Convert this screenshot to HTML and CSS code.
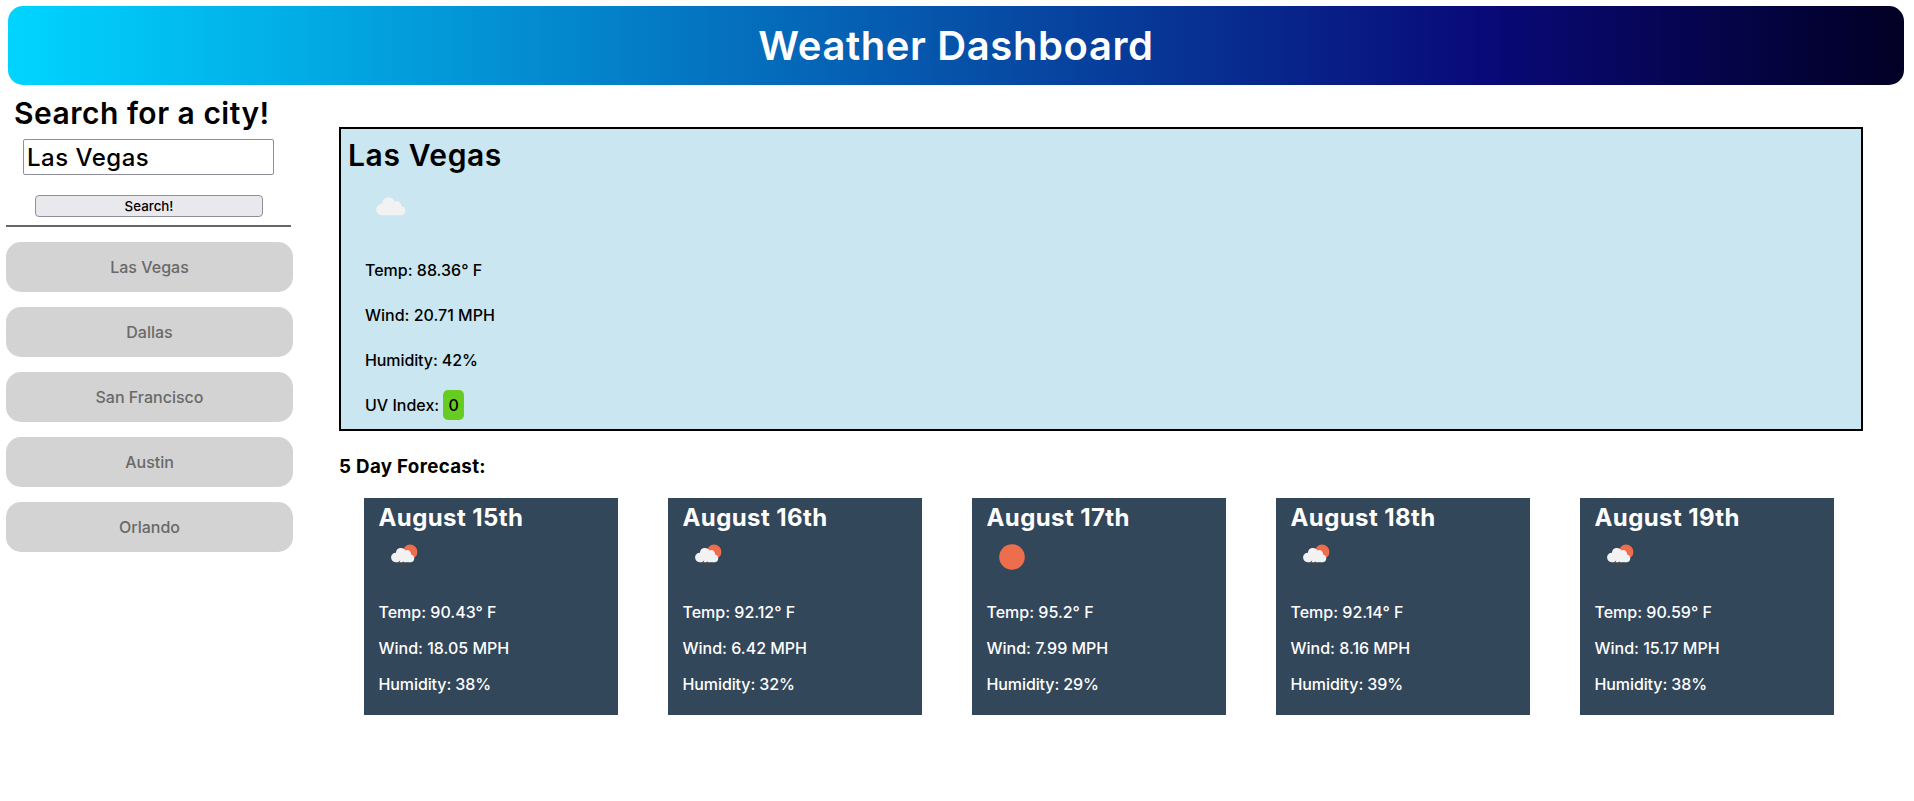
FILE: index.html
```html
<!DOCTYPE html>
<html lang="en">
<head>
<meta charset="utf-8">
<title>Weather Dashboard</title>
<link rel="stylesheet" href="styles.css">
</head>
<body>
<svg class="defs" aria-hidden="true">
  <symbol id="cloud" viewBox="0 0 50 50">
    <path class="cloud" d="M15.5 34.2a5.6 5.6 0 0 1 .8-11.4a6.3 6.3 0 0 1 12.2-2.2a4.4 4.4 0 0 1 6.6 4.4a4.7 4.7 0 0 1 .7 9.2z"/>
  </symbol>
  <symbol id="rain" viewBox="0 0 50 50">
    <circle class="sun" cx="31.1" cy="19.9" r="7.3"/>
    <path class="cloud" d="M16.6 30.2a4.7 4.7 0 0 1 .3-9.4a5.3 5.3 0 0 1 9.8-2.3a3.6 3.6 0 0 1 5.2 4a3.9 3.9 0 0 1 .1 7.7z"/>
    <path class="drops" d="M20.5 29.2l-1.2 2.2M24.2 30l-1 1.6M27.8 30.8l-1 1.6M18 33.6l-1.2 2.2M22.2 33.2l-1.4 2.4M25.8 34.2l-1.6 2.8"/>
  </symbol>
  <symbol id="sun" viewBox="0 0 50 50"><circle class="sun" cx="25" cy="25" r="12.8"/></symbol>
</svg>
<header class="banner"><h1>Weather Dashboard</h1></header>
<div class="layout">
  <aside class="sidebar">
    <h2 class="search-title">Search for a city!</h2>
    <input class="search-input" type="text" value="Las Vegas">
    <button class="search-button">Search!</button>
    <div class="rule"></div>
    <div class="history">
      <button>Las Vegas</button>
      <button>Dallas</button>
      <button>San Francisco</button>
      <button>Austin</button>
      <button>Orlando</button>
    </div>
  </aside>
  <main class="content">
    <section class="current">
      <h2>Las Vegas</h2>
      <svg class="icon"><use href="#cloud"/></svg>
      <p>Temp: 88.36° F</p>
      <p>Wind: 20.71 MPH</p>
      <p class="humidity">Humidity: 42%</p>
      <p>UV Index: <span class="uv">0</span></p>
    </section>
    <h3 class="forecast-title">5 Day Forecast:</h3>
    <section class="forecast">
      <article class="card"><h2>August 15th</h2><svg class="icon"><use href="#rain"/></svg><p>Temp: 90.43° F</p><p>Wind: 18.05 MPH</p><p class="humidity">Humidity: 38%</p></article>
      <article class="card"><h2>August 16th</h2><svg class="icon"><use href="#rain"/></svg><p>Temp: 92.12° F</p><p>Wind: 6.42 MPH</p><p class="humidity">Humidity: 32%</p></article>
      <article class="card"><h2>August 17th</h2><svg class="icon"><use href="#sun"/></svg><p>Temp: 95.2° F</p><p>Wind: 7.99 MPH</p><p class="humidity">Humidity: 29%</p></article>
      <article class="card"><h2>August 18th</h2><svg class="icon"><use href="#rain"/></svg><p>Temp: 92.14° F</p><p>Wind: 8.16 MPH</p><p class="humidity">Humidity: 39%</p></article>
      <article class="card"><h2>August 19th</h2><svg class="icon"><use href="#rain"/></svg><p>Temp: 90.59° F</p><p>Wind: 15.17 MPH</p><p class="humidity">Humidity: 38%</p></article>
    </section>
  </main>
</div>
</body>
</html>
```
FILE: styles.css
```css
* { box-sizing: border-box; margin: 0; padding: 0; }

body {
  font-family: Inter, sans-serif;
  font-size: 16px;
  font-weight: 500;
  color: #000;
  background: #fff;
}

.defs { display: none; }
.icon { display: block; width: 50px; height: 50px; }
.cloud { fill: #f2f2f2; }
.sun { fill: #ec6e4c; }
.drops { stroke: #484848; stroke-width: 1; stroke-linecap: round; fill: none; }

.banner {
  display: flex;
  align-items: center;
  justify-content: center;
  height: 79px;
  margin: 6px 10px 0 8px;
  border-radius: 15px;
  color: #fff;
  background: linear-gradient(270deg, #020024 0%, #090979 22%, #00d4ff 100%);
}
.banner h1 {
  font-size: 40px;
  font-weight: 600;
  line-height: 48px;
  letter-spacing: 0.6px;
}

.layout { display: flex; }

.sidebar {
  display: flex;
  flex-direction: column;
  width: 293px;
  padding: 8px 0 0 6px;
}
.search-title {
  padding-left: 8px;
  font-size: 30px;
  font-weight: 600;
  line-height: 41px;
  height: 39px;
  letter-spacing: 0.5px;
  white-space: nowrap;
}
.search-input {
  width: 251px;
  height: 36px;
  margin: 7px 0 0 17px;
  padding: 0 3px;
  border: 1px solid #8f8f9d;
  border-radius: 2px;
  font: 500 24px/34px Inter, sans-serif;
  letter-spacing: 0.5px;
}
.search-button {
  width: 228px;
  height: 22px;
  margin: 20px 0 0 29px;
  border: 1px solid #8f8f9d;
  border-radius: 4px;
  background: #e9e9ed;
  font: 500 13.333px/20px Inter, sans-serif;
  color: #000;
}
.rule {
  width: 285px;
  height: 2px;
  margin-top: 8px;
  background: #666;
}
.history { display: grid; gap: 15px; margin-top: 15px; }
.history button {
  height: 50px;
  border: 0;
  border-radius: 15px;
  background: #d3d3d3;
  color: #696969;
  font: 500 16px/20px Inter, sans-serif;
}

.content { width: 1524px; margin: 42px 0 0 46px; }

.current {
  height: 304px;
  padding: 6px 7px 0;
  border: 2px solid #000;
  background: #cae6f0;
}
.current h2 {
  font-size: 30px;
  font-weight: 600;
  line-height: 40px;
  letter-spacing: 0.6px;
}
.current .icon { margin: 6px 0 0 18px; }
.current p { margin-left: 17px; line-height: 45px; }
.current .icon + p { margin-top: 17px; }
.uv {
  display: inline-block;
  padding: 0 5px;
  border-radius: 5px;
  line-height: 30px;
  background: #66cc22;
}
.humidity { letter-spacing: -0.1px; }

.forecast-title {
  margin-top: 24px;
  font-size: 18.72px;
  font-weight: 700;
  line-height: 24px;
  letter-spacing: 0.33px;
}

.forecast { display: flex; gap: 50px; margin: 19px 0 0 25px; }
.card {
  width: 254px;
  height: 217px;
  padding: 5px 14.5px 0;
  color: #fff;
  background: #33475b;
}
.card h2 {
  font-size: 24px;
  font-weight: 700;
  line-height: 29px;
  letter-spacing: 0.4px;
}
.card .icon { margin-left: 0.5px; }
.card p { line-height: 36px; }
.card .icon + p { margin-top: 12px; }
```
